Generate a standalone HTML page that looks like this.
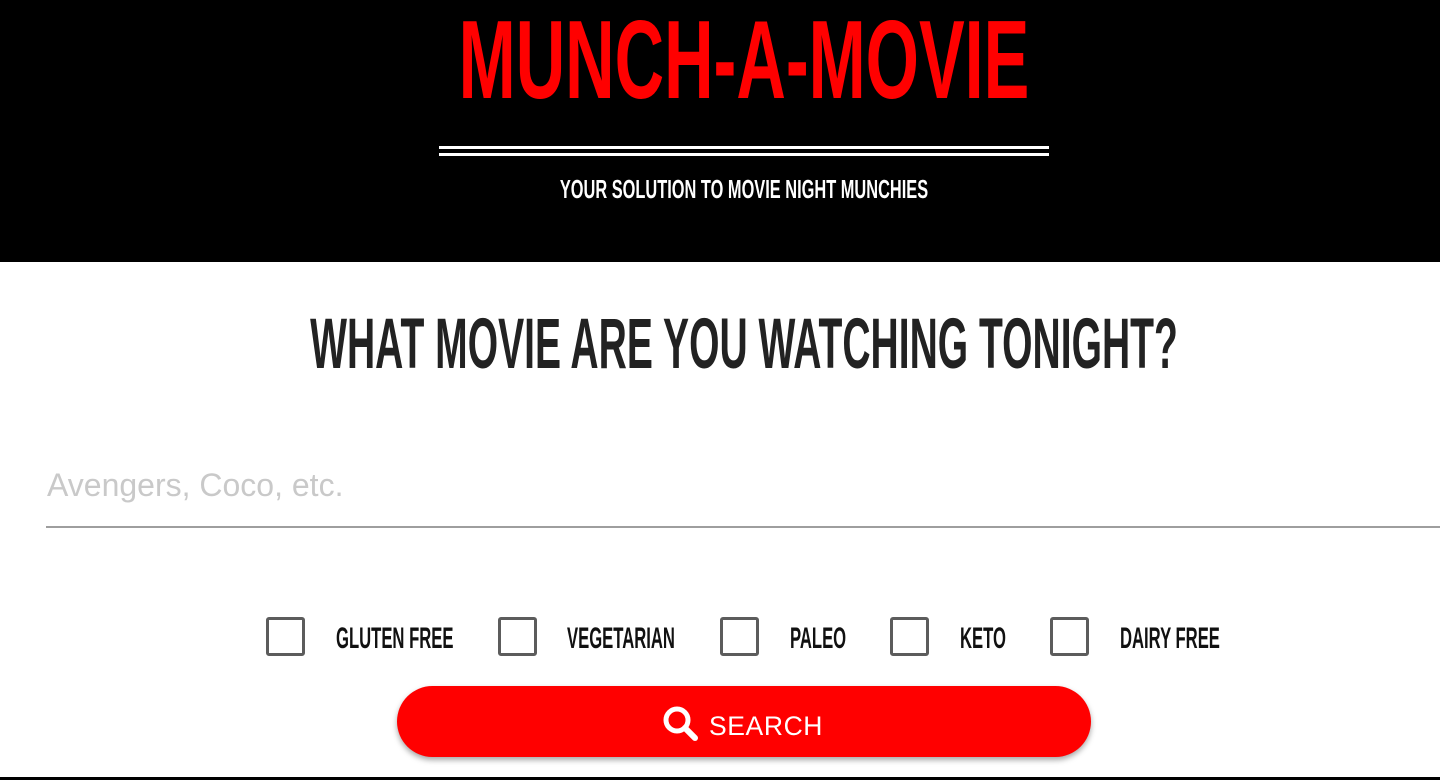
<!DOCTYPE html>
<html><head><meta charset="utf-8"><style>
*{margin:0;padding:0;box-sizing:border-box}
body{width:1440px;height:780px;overflow:hidden;background:#fff;position:relative;font-family:"Liberation Sans Narrow","Liberation Sans",sans-serif}
.b{font-family:"Liberation Sans Narrow","Liberation Sans",sans-serif;font-weight:bold;white-space:nowrap;position:absolute;line-height:1}
.hdr{position:absolute;left:0;top:0;width:1440px;height:262px;background:#000}
.c{left:744px;transform-origin:0 0}
.line{position:absolute;left:439px;width:610px;height:3px;background:#fff}
.cb{position:absolute;top:617px;width:39px;height:39px;border:3px solid #5c5c5c;border-radius:3px}
.lb{top:624px;font-size:30px;color:#111;transform-origin:left top;transform:scaleX(0.555)}
</style></head><body>
<div class="hdr"></div>
<div class="b c" style="top:5px;font-size:111px;color:#f00;transform:scaleX(0.617) translateX(-50%)">MUNCH-A-MOVIE</div>
<div class="line" style="top:146px"></div>
<div class="line" style="top:153px"></div>
<div class="b c" style="top:176px;font-size:26px;color:#fff;transform:scaleX(0.63) translateX(-50%)">YOUR SOLUTION TO MOVIE NIGHT MUNCHIES</div>
<div class="b c" style="top:309px;font-size:71px;color:#222;transform:scaleX(0.55) translateX(-50%)">WHAT MOVIE ARE YOU WATCHING TONIGHT?</div>
<div style="position:absolute;left:47px;top:467px;font-family:'Liberation Sans',sans-serif;font-size:32px;color:#c9c9c9">Avengers, Coco, etc.</div>
<div style="position:absolute;left:46px;top:526px;width:1394px;height:2px;background:#9e9e9e"></div>
<div class="cb" style="left:266px"></div><div class="b lb" style="left:336px">GLUTEN FREE</div>
<div class="cb" style="left:498px"></div><div class="b lb" style="left:567px">VEGETARIAN</div>
<div class="cb" style="left:720px"></div><div class="b lb" style="left:790px">PALEO</div>
<div class="cb" style="left:890px"></div><div class="b lb" style="left:960px">KETO</div>
<div class="cb" style="left:1050px"></div><div class="b lb" style="left:1120px">DAIRY FREE</div>
<div style="position:absolute;left:397px;top:686px;width:694px;height:71px;background:#f00;border-radius:36px;box-shadow:0 3px 6px rgba(0,0,0,.35)"></div>
<svg style="position:absolute;left:662px;top:705px" width="38" height="38" viewBox="0 0 38 38"><circle cx="15" cy="15" r="11" fill="none" stroke="#fff" stroke-width="5"/><line x1="23" y1="23" x2="33" y2="33" stroke="#fff" stroke-width="6" stroke-linecap="round"/></svg>
<div style="position:absolute;left:709px;top:711px;font-family:'Liberation Sans',sans-serif;font-size:26.5px;color:#fff;letter-spacing:0.6px">SEARCH</div>
<div style="position:absolute;left:0;top:777px;width:1440px;height:3px;background:#000"></div>
</body></html>
